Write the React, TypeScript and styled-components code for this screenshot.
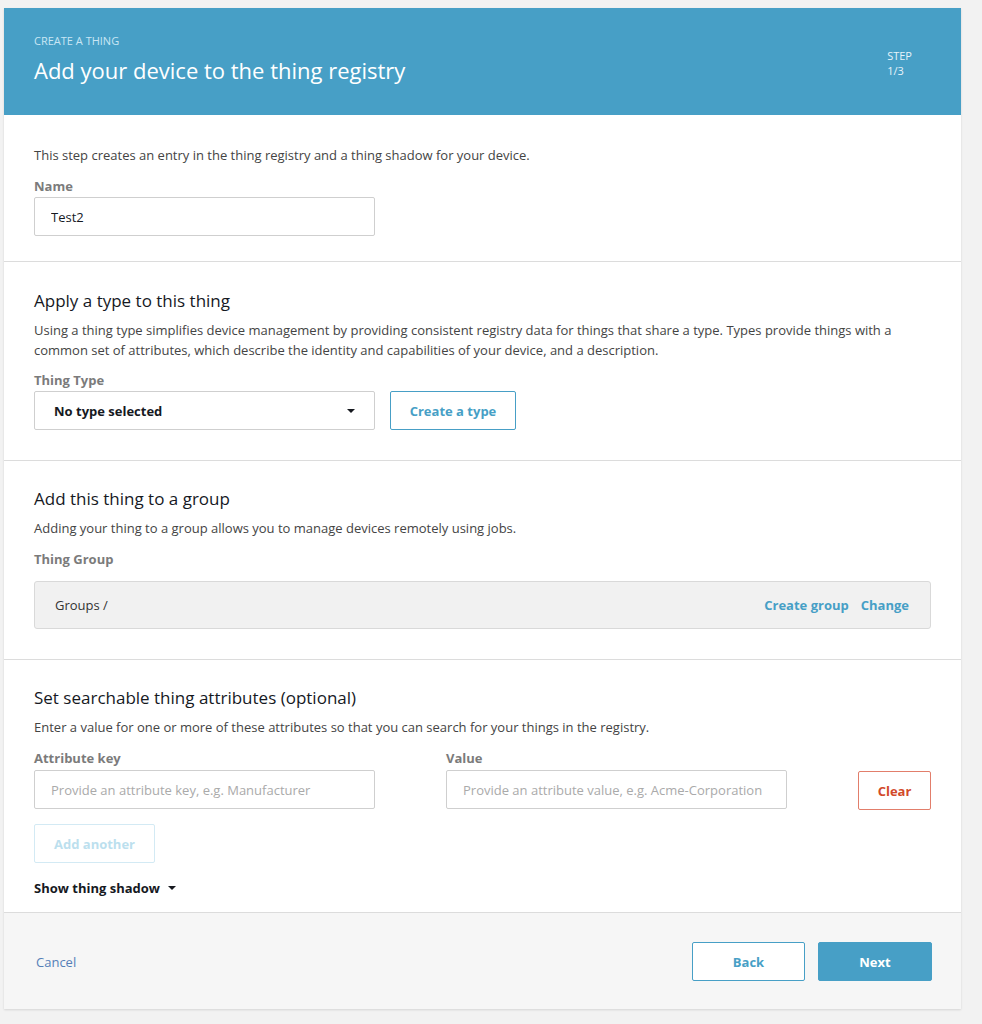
import React, { useState } from 'react';
import styled, { createGlobalStyle } from 'styled-components';

const Global = createGlobalStyle`
  html, body {
    margin: 0;
    padding: 0;
    background: #f2f2f2;
    font-family: "Open Sans", "Liberation Sans", Arial, sans-serif;
    color: #444;
  }
  * { box-sizing: border-box; }
`;

const Page = styled.div`
  padding: 8px 21px 15px 4px;
`;

const Card = styled.div`
  background: #fff;
  box-shadow: 0 1px 2px rgba(0, 0, 0, 0.12);
`;

const Header = styled.div`
  background: #479fc6;
  padding: 26px 30px 30px 30px;
  display: flex;
  justify-content: space-between;
  align-items: flex-start;
`;

const Eyebrow = styled.div`
  font-size: 11px;
  line-height: 14px;
  color: #c9e6f4;
`;

const Title = styled.h1`
  margin: 7px 0 0 0;
  font-size: 22px;
  line-height: 30px;
  font-weight: 400;
  color: #fff;
`;

const Step = styled.div`
  margin: 14px 19px 0 0;
  font-size: 11px;
  line-height: 15px;
  color: #e6f3fa;
`;

const Section = styled.div<{ $top?: number; $bottom?: number }>`
  padding: ${p => p.$top ?? 26}px 30px ${p => p.$bottom ?? 30}px 30px;
  border-bottom: 1px solid #dcdcdc;
`;

const Heading = styled.h2`
  margin: 0 0 7px 0;
  font-size: 17px;
  line-height: 24px;
  font-weight: 400;
  color: #16191f;
`;

const Text = styled.p<{ $gap?: number }>`
  margin: 0 0 ${p => p.$gap ?? 11}px 0;
  font-size: 13px;
  line-height: 20px;
  color: #444;
`;

const Label = styled.div<{ $gap?: number }>`
  font-size: 13px;
  line-height: 20px;
  font-weight: 700;
  color: #7b7b7b;
  margin-bottom: ${p => p.$gap ?? 1}px;
`;

const Row = styled.div<{ $gap?: number }>`
  display: flex;
  align-items: flex-start;
  gap: ${p => p.$gap ?? 15}px;
`;

const Field = styled.div`
  width: 341px;
  display: flex;
  flex-direction: column;
`;

const Input = styled.input`
  width: 341px;
  height: 39px;
  border: 1px solid #cfcfcf;
  border-radius: 2px;
  padding: 0 16px;
  font-family: inherit;
  font-size: 13px;
  color: #16191f;
  outline: none;
  &::placeholder {
    color: #aaa;
  }
`;

const Select = styled.div`
  width: 341px;
  height: 39px;
  border: 1px solid #cfcfcf;
  border-radius: 2px;
  padding: 0 19px 0 19px;
  display: flex;
  align-items: center;
  justify-content: space-between;
  font-size: 13px;
  font-weight: 700;
  color: #16191f;
`;

const Caret = styled.span`
  width: 0;
  height: 0;
  border-left: 4px solid transparent;
  border-right: 4px solid transparent;
  border-top: 4px solid #16191f;
`;

const Button = styled.button<{ $tone?: 'blue' | 'red' | 'disabled' | 'solid'; $w: number; $top?: number }>`
  width: ${p => p.$w}px;
  height: 39px;
  margin-top: ${p => p.$top ?? 0}px;
  border-radius: 2px;
  font-family: inherit;
  font-size: 13px;
  font-weight: 700;
  cursor: pointer;
  background: ${p => (p.$tone === 'solid' ? '#479fc6' : '#fff')};
  border: 1px solid
    ${p =>
      p.$tone === 'red'
        ? '#e27e6b'
        : p.$tone === 'disabled'
        ? '#d3eaf4'
        : '#479fc6'};
  color: ${p =>
    p.$tone === 'solid'
      ? '#fff'
      : p.$tone === 'red'
      ? '#d24a2a'
      : p.$tone === 'disabled'
      ? '#bcdfee'
      : '#479fc6'};
`;

const GroupBox = styled.div`
  height: 48px;
  background: #f1f1f1;
  border: 1px solid #d9d9d9;
  border-radius: 3px;
  display: flex;
  align-items: center;
  justify-content: space-between;
  padding: 0 21px 0 20px;
  font-size: 13px;
  color: #333;
`;

const Links = styled.div`
  display: flex;
  gap: 12px;
`;

const Link = styled.a`
  color: #479fc6;
  font-weight: 700;
  font-size: 13px;
  text-decoration: none;
  cursor: pointer;
`;

const Toggle = styled.div`
  margin-top: 15px;
  display: flex;
  align-items: center;
  gap: 8px;
  font-size: 13px;
  line-height: 20px;
  font-weight: 700;
  color: #16191f;
`;

const Footer = styled.div`
  background: #f6f6f6;
  padding: 29px 29px 28px 32px;
  display: flex;
  align-items: center;
  justify-content: space-between;
`;

const Cancel = styled.a`
  font-size: 13px;
  color: #5580b8;
  cursor: pointer;
`;

const Actions = styled.div`
  display: flex;
  gap: 13px;
`;

export default function App() {
  const [name, setName] = useState('Test2');
  const [shadow, setShadow] = useState(false);
  return (
    <Page>
      <Global />
      <Card>
        <Header>
          <div>
            <Eyebrow>CREATE A THING</Eyebrow>
            <Title>Add your device to the thing registry</Title>
          </div>
          <Step>
            STEP
            <br />
            1/3
          </Step>
        </Header>

        <Section $top={30} $bottom={25}>
          <Text>This step creates an entry in the thing registry and a thing shadow for your device.</Text>
          <Label>Name</Label>
          <Input value={name} onChange={e => setName(e.target.value)} />
        </Section>

        <Section $top={27}>
          <Heading>Apply a type to this thing</Heading>
          <Text $gap={10}>
            Using a thing type simplifies device management by providing consistent registry data for things that share
            a type. Types provide things with a common set of attributes, which describe the identity and capabilities
            of your device, and a description.
          </Text>
          <Label>Thing Type</Label>
          <Row>
            <Select>
              No type selected
              <Caret />
            </Select>
            <Button $tone="blue" $w={126}>
              Create a type
            </Button>
          </Row>
        </Section>

        <Section>
          <Heading>Add this thing to a group</Heading>
          <Text>Adding your thing to a group allows you to manage devices remotely using jobs.</Text>
          <Label $gap={12}>Thing Group</Label>
          <GroupBox>
            <span>Groups /</span>
            <Links>
              <Link>Create group</Link>
              <Link>Change</Link>
            </Links>
          </GroupBox>
        </Section>

        <Section $bottom={14}>
          <Heading>Set searchable thing attributes (optional)</Heading>
          <Text>Enter a value for one or more of these attributes so that you can search for your things in the registry.</Text>
          <Row $gap={71}>
            <Field>
              <Label $gap={2}>Attribute key</Label>
              <Input placeholder="Provide an attribute key, e.g. Manufacturer" />
            </Field>
            <Field>
              <Label $gap={2}>Value</Label>
              <Input placeholder="Provide an attribute value, e.g. Acme-Corporation" />
            </Field>
            <Button $tone="red" $w={74} $top={23}>
              Clear
            </Button>
          </Row>
          <Button $tone="disabled" $w={121} $top={14} disabled>
            Add another
          </Button>
          <Toggle onClick={() => setShadow(!shadow)}>
            Show thing shadow
            <Caret />
          </Toggle>
        </Section>

        <Footer>
          <Cancel>Cancel</Cancel>
          <Actions>
            <Button $tone="blue" $w={113}>
              Back
            </Button>
            <Button $tone="solid" $w={114}>
              Next
            </Button>
          </Actions>
        </Footer>
      </Card>
    </Page>
  );
}
